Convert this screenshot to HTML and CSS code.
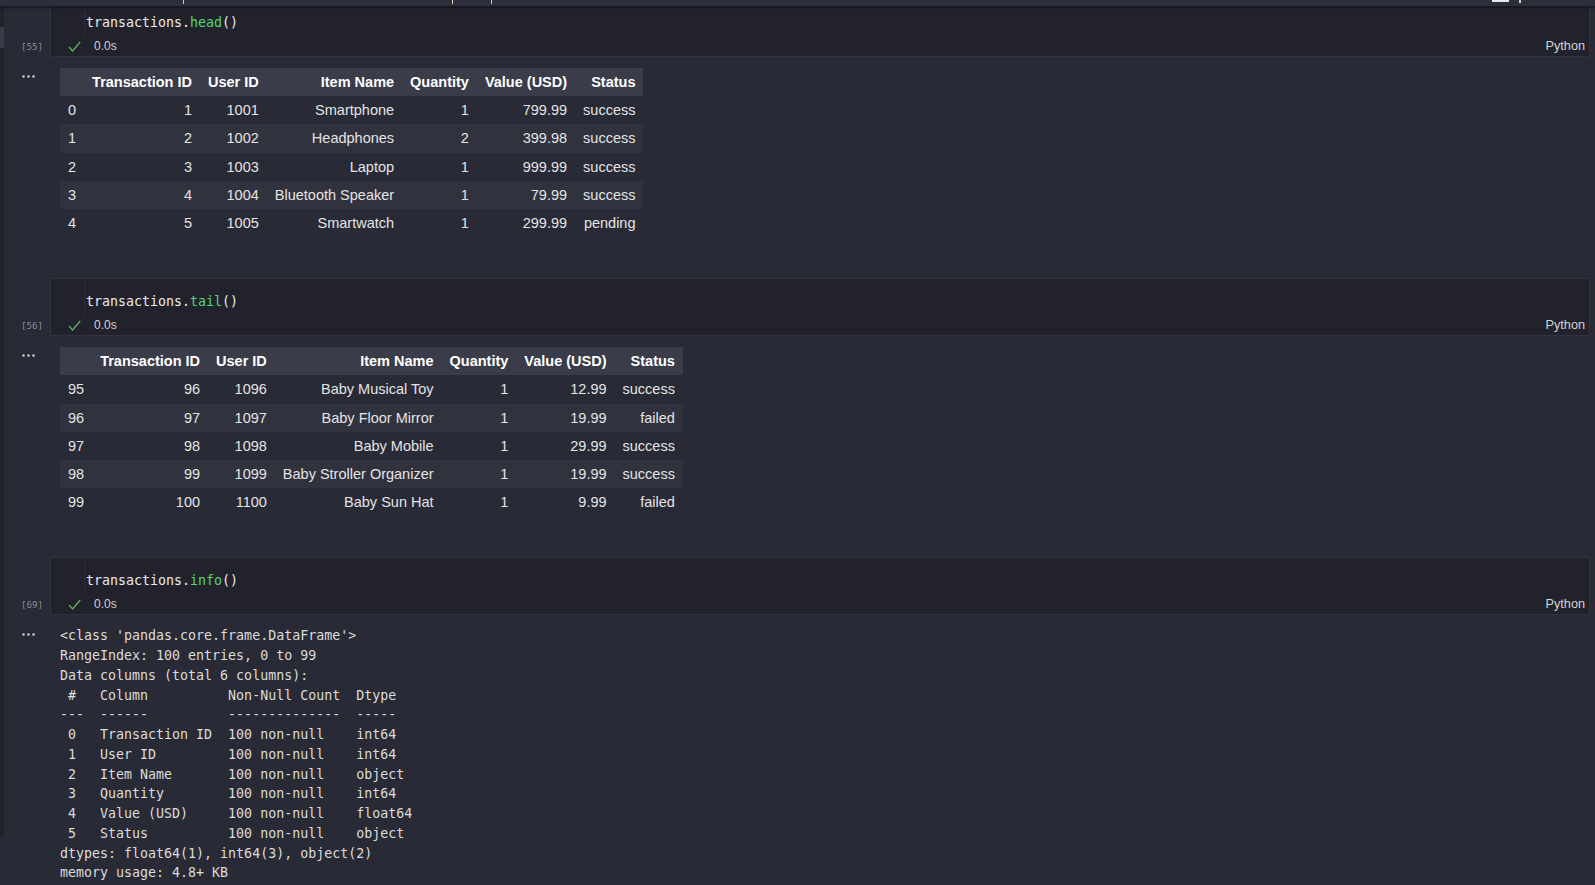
FILE: index.html
```html
<!DOCTYPE html>
<html lang="en">
<head>
<meta charset="utf-8">
<title>transactions notebook</title>
<link rel="stylesheet" href="styles.css">
</head>
<body>
<div class="topbar">
  <span class="tick tick-a"></span>
  <span class="tick tick-b"></span>
  <span class="tick tick-c"></span>
  <span class="tb-icon"></span>
  <span class="tb-y"></span>
</div>
<div class="page">
  <div class="rail"><div class="rail-thumb"></div></div>
  <main class="notebook">

    <section class="cell">
      <div class="cell-in">
        <div class="count">[55]</div>
        <div class="box">
          <div class="editor"><div class="ed-gutter"></div><div class="code">transactions.<span class="fn">head</span>()</div></div>
          <div class="status">
            <svg class="check" width="13" height="11" viewBox="0 0 13 11"><path d="M1 6 L4.6 10 L12.2 1" fill="none" stroke="#5fae63" stroke-width="1.3"/></svg>
            <span class="time">0.0s</span>
            <span class="lang">Python</span>
          </div>
        </div>
      </div>
      <div class="cell-out">
        <div class="more"><svg width="14" height="3" viewBox="0 0 14 3"><circle cx="1.5" cy="1.5" r="1.3" fill="#c9cad0"/><circle cx="6.5" cy="1.5" r="1.3" fill="#c9cad0"/><circle cx="11.5" cy="1.5" r="1.3" fill="#c9cad0"/></svg></div>
        <div class="out">
          <table class="df">
            <thead><tr><th></th><th>Transaction ID</th><th>User ID</th><th>Item Name</th><th>Quantity</th><th>Value (USD)</th><th>Status</th></tr></thead>
            <tbody>
              <tr><td class="idx">0</td><td>1</td><td>1001</td><td>Smartphone</td><td>1</td><td>799.99</td><td>success</td></tr>
              <tr><td class="idx">1</td><td>2</td><td>1002</td><td>Headphones</td><td>2</td><td>399.98</td><td>success</td></tr>
              <tr><td class="idx">2</td><td>3</td><td>1003</td><td>Laptop</td><td>1</td><td>999.99</td><td>success</td></tr>
              <tr><td class="idx">3</td><td>4</td><td>1004</td><td>Bluetooth Speaker</td><td>1</td><td>79.99</td><td>success</td></tr>
              <tr><td class="idx">4</td><td>5</td><td>1005</td><td>Smartwatch</td><td>1</td><td>299.99</td><td>pending</td></tr>
            </tbody>
          </table>
        </div>
      </div>
    </section>

    <section class="cell">
      <div class="cell-in">
        <div class="count">[56]</div>
        <div class="box">
          <div class="editor"><div class="ed-gutter"></div><div class="code">transactions.<span class="fn">tail</span>()</div></div>
          <div class="status">
            <svg class="check" width="13" height="11" viewBox="0 0 13 11"><path d="M1 6 L4.6 10 L12.2 1" fill="none" stroke="#5fae63" stroke-width="1.3"/></svg>
            <span class="time">0.0s</span>
            <span class="lang">Python</span>
          </div>
        </div>
      </div>
      <div class="cell-out">
        <div class="more"><svg width="14" height="3" viewBox="0 0 14 3"><circle cx="1.5" cy="1.5" r="1.3" fill="#c9cad0"/><circle cx="6.5" cy="1.5" r="1.3" fill="#c9cad0"/><circle cx="11.5" cy="1.5" r="1.3" fill="#c9cad0"/></svg></div>
        <div class="out">
          <table class="df">
            <thead><tr><th></th><th>Transaction ID</th><th>User ID</th><th>Item Name</th><th>Quantity</th><th>Value (USD)</th><th>Status</th></tr></thead>
            <tbody>
              <tr><td class="idx">95</td><td>96</td><td>1096</td><td>Baby Musical Toy</td><td>1</td><td>12.99</td><td>success</td></tr>
              <tr><td class="idx">96</td><td>97</td><td>1097</td><td>Baby Floor Mirror</td><td>1</td><td>19.99</td><td>failed</td></tr>
              <tr><td class="idx">97</td><td>98</td><td>1098</td><td>Baby Mobile</td><td>1</td><td>29.99</td><td>success</td></tr>
              <tr><td class="idx">98</td><td>99</td><td>1099</td><td>Baby Stroller Organizer</td><td>1</td><td>19.99</td><td>success</td></tr>
              <tr><td class="idx">99</td><td>100</td><td>1100</td><td>Baby Sun Hat</td><td>1</td><td>9.99</td><td>failed</td></tr>
            </tbody>
          </table>
        </div>
      </div>
    </section>

    <section class="cell">
      <div class="cell-in">
        <div class="count">[69]</div>
        <div class="box">
          <div class="editor"><div class="ed-gutter"></div><div class="code">transactions.<span class="fn">info</span>()</div></div>
          <div class="status">
            <svg class="check" width="13" height="11" viewBox="0 0 13 11"><path d="M1 6 L4.6 10 L12.2 1" fill="none" stroke="#5fae63" stroke-width="1.3"/></svg>
            <span class="time">0.0s</span>
            <span class="lang">Python</span>
          </div>
        </div>
      </div>
      <div class="cell-out">
        <div class="more"><svg width="14" height="3" viewBox="0 0 14 3"><circle cx="1.5" cy="1.5" r="1.3" fill="#c9cad0"/><circle cx="6.5" cy="1.5" r="1.3" fill="#c9cad0"/><circle cx="11.5" cy="1.5" r="1.3" fill="#c9cad0"/></svg></div>
        <div class="out out-text">
<pre class="stream">&lt;class 'pandas.core.frame.DataFrame'&gt;
RangeIndex: 100 entries, 0 to 99
Data columns (total 6 columns):
 #   Column          Non-Null Count  Dtype  
---  ------          --------------  -----  
 0   Transaction ID  100 non-null    int64  
 1   User ID         100 non-null    int64  
 2   Item Name       100 non-null    object 
 3   Quantity        100 non-null    int64  
 4   Value (USD)     100 non-null    float64
 5   Status          100 non-null    object 
dtypes: float64(1), int64(3), object(2)
memory usage: 4.8+ KB</pre>
        </div>
      </div>
    </section>

  </main>
</div>
</body>
</html>
```

FILE: styles.css
```css
html, body {
  margin: 0;
  padding: 0;
}

body {
  width: 1595px;
  height: 885px;
  overflow: hidden;
  background: #282a36;
  color: #e0e0e0;
  font-family: "Liberation Sans", Arial, sans-serif;
}

.topbar {
  position: fixed;
  top: 0;
  left: 0;
  right: 0;
  height: 6px;
  background: #2c2e3b;
  border-bottom: 1px solid #1b1c23;
  box-shadow: 0 1px 2px rgba(0, 0, 0, 0.45);
  z-index: 10;
}

.tick {
  position: absolute;
  top: 0;
  width: 1px;
  height: 4px;
  background: #c8c8c8;
}
.tick-a { left: 183px; }
.tick-b { left: 452px; background: #e8e0b0; }
.tick-c { left: 491px; }

.tb-icon {
  position: absolute;
  left: 1492px;
  top: 0;
  width: 17px;
  height: 2px;
  background: #e6e6e6;
}
.tb-y {
  position: absolute;
  left: 1519px;
  top: 0;
  width: 2px;
  height: 3px;
  background: #cfcfcf;
}

.page {
  display: flex;
  align-items: flex-start;
}

.rail {
  width: 4px;
  height: 838px;
  flex: none;
  background: #21222b;
  padding-top: 27px;
  box-sizing: border-box;
}
.rail-thumb {
  height: 21px;
  background: #3a3c48;
}

.notebook {
  flex: 1;
  margin-top: -1px;
  padding-right: 5px;
}

/* ---------- cell input ---------- */
.cell-in {
  display: grid;
  grid-template-columns: 46px 1fr;
}

.count {
  display: flex;
  align-items: flex-end;
  padding: 0 0 0 17px;
  line-height: 20px;
  font-family: "DejaVu Sans Mono", monospace;
  font-size: 9.2px;
  color: #8a8d9a;
}

.box {
  background: #21222c;
  border: 1px solid #30323d;
}

.editor {
  display: grid;
  grid-template-columns: 34px 1fr;
}
.ed-gutter {
  border-right: 1px solid #2d2e39;
}
.code {
  padding: 13px 0 3px 1px;
  line-height: 20px;
  font-family: "DejaVu Sans Mono", monospace;
  font-size: 13.3px;
  color: #ececec;
  white-space: pre;
}
.fn {
  color: #54d872;
}

.status {
  height: 20px;
  display: flex;
  align-items: center;
  padding: 0 4px 0 17px;
  font-size: 12px;
  color: #d0d0d0;
}
.check {
  flex: none;
  margin-right: 13px;
}
.lang {
  margin-left: auto;
  font-size: 12.7px;
  color: #d4d4d4;
}

/* ---------- cell output ---------- */
.cell-out {
  display: grid;
  grid-template-columns: 46px 1fr;
}
.more {
  padding: 16px 0 0 18px;
  line-height: 0;
}
.out {
  padding: 11px 0 41px 10px;
}
.out-text {
  padding-bottom: 0;
}

.df {
  border-collapse: collapse;
  border-spacing: 0;
  font-size: 14.5px;
  line-height: 20.2px;
  color: #e4e4e4;
}
.df th,
.df td {
  padding: 4px 8px;
  text-align: right;
  white-space: nowrap;
}
.df thead th {
  background: #3a3c49;
  color: #ffffff;
  font-weight: bold;
}
.df td.idx {
  text-align: left;
}
.df tbody tr:nth-child(even) {
  background: #30323e;
}

.stream {
  margin: 0;
  font-family: "DejaVu Sans Mono", monospace;
  font-size: 13.3px;
  line-height: 19.75px;
  color: #dcdcdc;
  white-space: pre;
}
```
